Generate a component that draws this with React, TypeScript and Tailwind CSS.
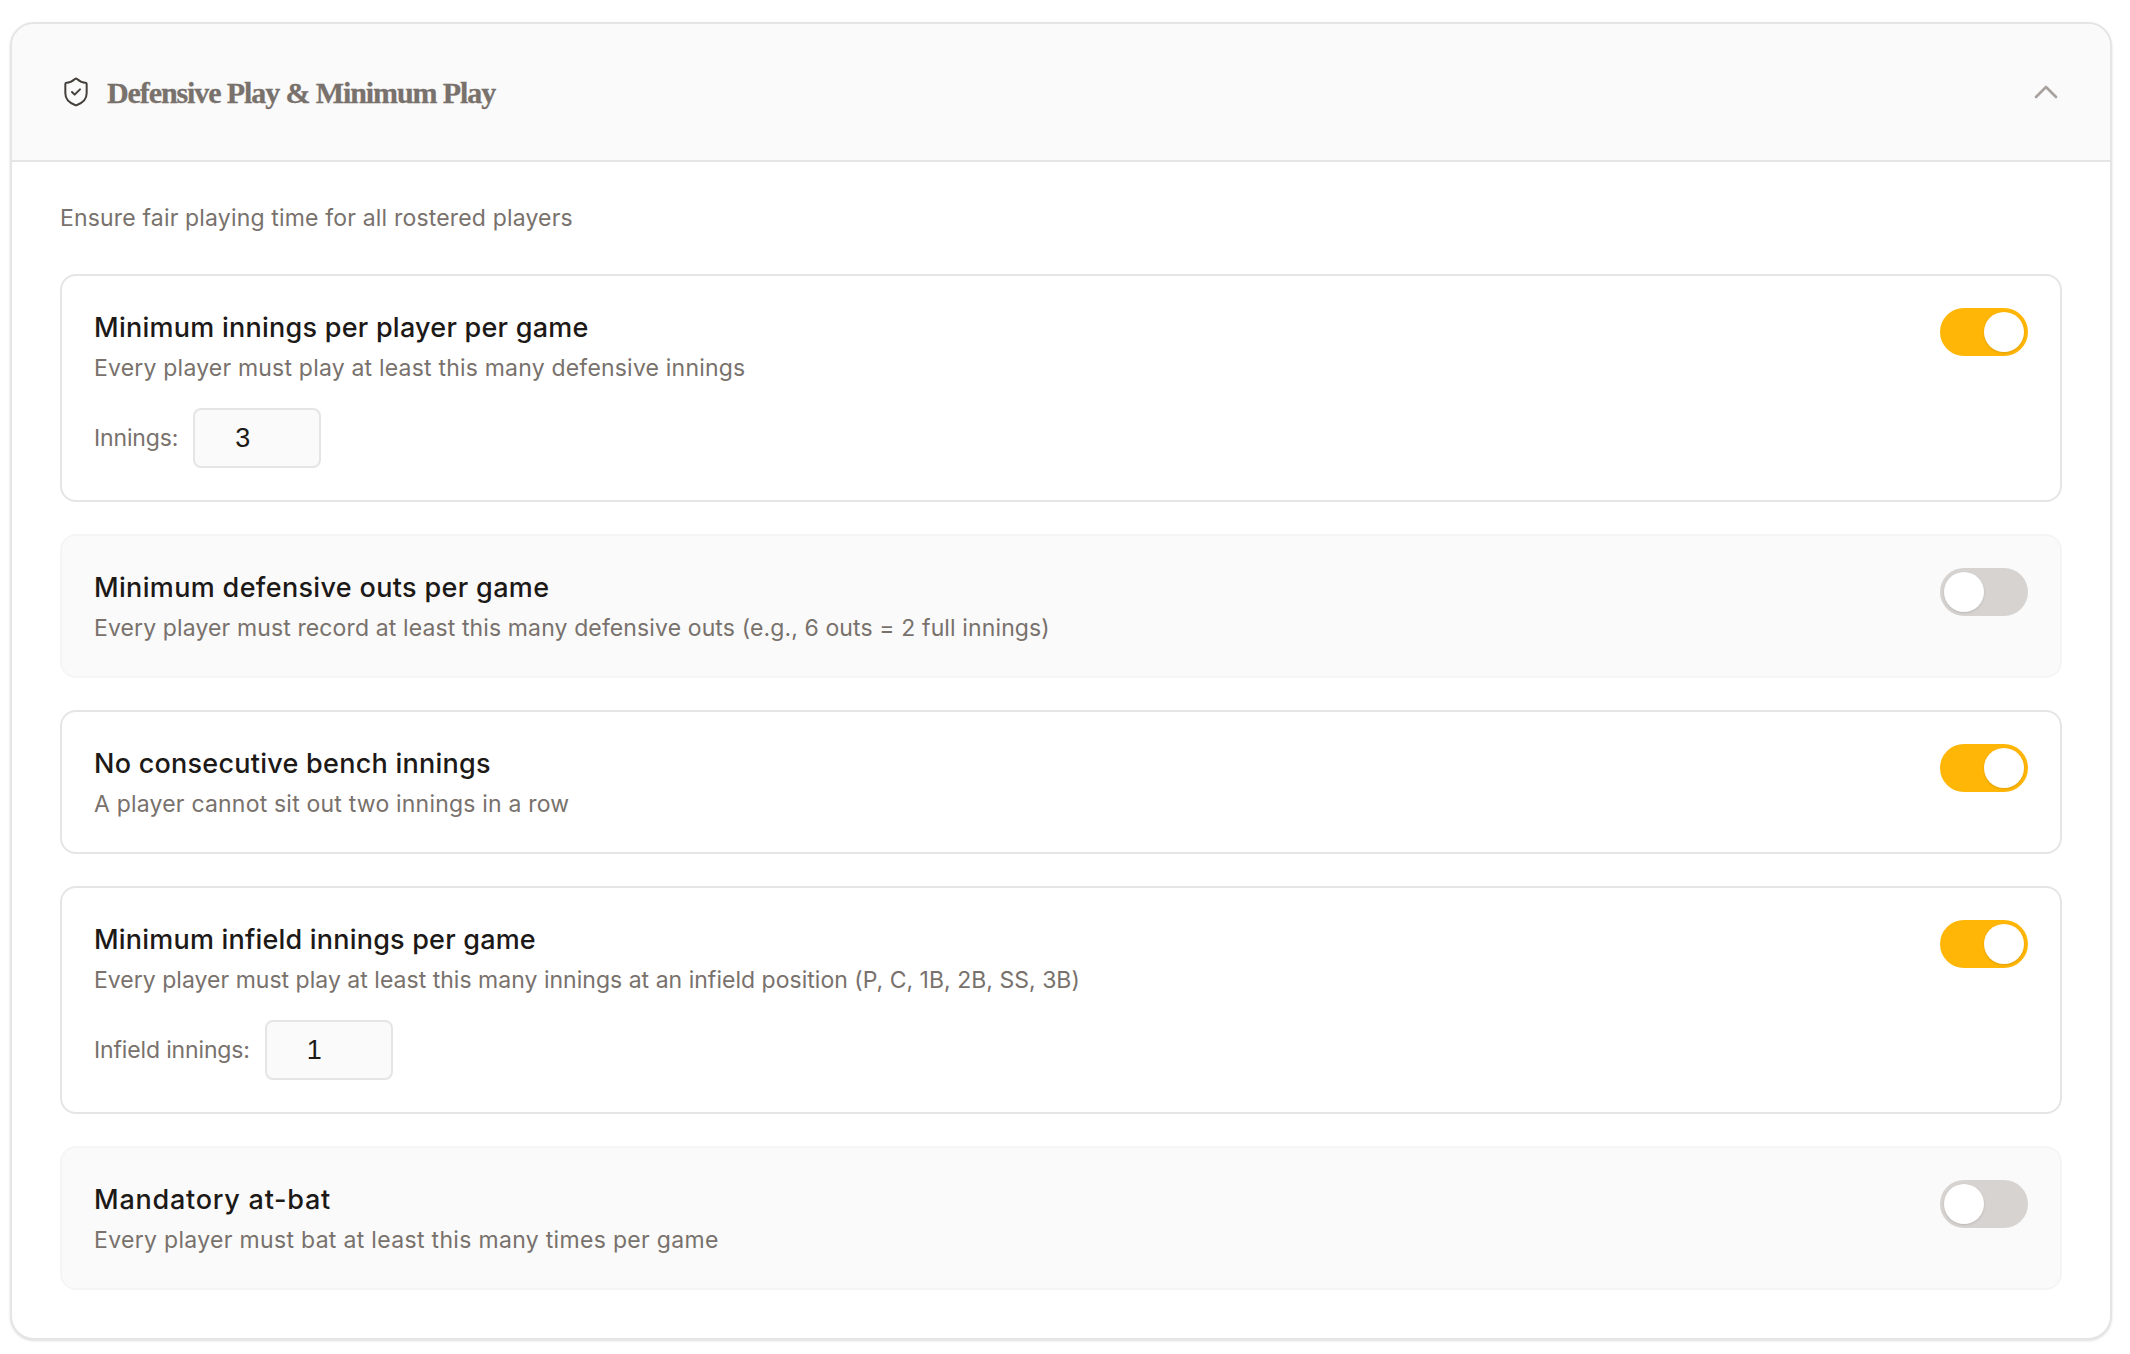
import { ChevronUp, ShieldCheck } from 'lucide-react';

const RULES = [
  {
    title: 'Minimum innings per player per game',
    titleClass: 'tracking-[0.25px]',
    desc: 'Every player must play at least this many defensive innings',
    descClass: 'tracking-[0.2px]',
    on: true,
    label: 'Innings:',
    value: '3',
  },
  {
    title: 'Minimum defensive outs per game',
    titleClass: 'tracking-[0.34px]',
    desc: 'Every player must record at least this many defensive outs (e.g., 6 outs = 2 full innings)',
    descClass: 'tracking-[0.12px]',
    on: false,
  },
  {
    title: 'No consecutive bench innings',
    titleClass: 'tracking-[0.25px]',
    desc: 'A player cannot sit out two innings in a row',
    descClass: 'tracking-[0.2px]',
    on: true,
  },
  {
    title: 'Minimum infield innings per game',
    titleClass: 'tracking-[0.2px]',
    desc: 'Every player must play at least this many innings at an infield position (P, C, 1B, 2B, SS, 3B)',
    descClass: 'tracking-[0.02px]',
    on: true,
    label: 'Infield innings:',
    value: '1',
  },
  {
    title: 'Mandatory at-bat',
    titleClass: 'tracking-[0.75px]',
    desc: 'Every player must bat at least this many times per game',
    descClass: 'tracking-[0.32px]',
    on: false,
  },
];

function Toggle({ on }: { on: boolean }) {
  return (
    <div
      className={
        on
          ? 'w-[88px] h-12 rounded-full bg-[#ffb607] p-1 flex justify-end shrink-0'
          : 'w-[88px] h-12 rounded-full bg-[#d6d3d1] p-1 flex justify-start shrink-0'
      }
    >
      <div className="w-10 h-10 rounded-full bg-white shadow-sm" />
    </div>
  );
}

export default function App() {
  return (
    <div className="bg-white min-h-[1354px] pt-[22px] pl-[10px] pr-[18px] font-['Inter','Liberation_Sans',sans-serif]">
      <div className="rounded-3xl border-2 border-[#e5e5e5] bg-white overflow-hidden shadow-sm">
        <div className="h-[138px] bg-[#fafafa] border-b-2 border-[#e5e5e5] flex items-center justify-between pl-12 pr-11">
          <div className="flex items-center gap-[15px]">
            <ShieldCheck className="w-8 h-8 text-[#44403c]" strokeWidth={1.5} />
            <h2 className="font-['Liberation_Serif',serif] font-bold text-[30px] tracking-[-1.1px] text-[#78716c] mt-px [-webkit-text-stroke:0.3px_#78716c]">
              Defensive Play &amp; Minimum Play
            </h2>
          </div>
          <ChevronUp className="w-10 h-10 text-[#a8a29e]" strokeWidth={1.6} />
        </div>

        <div className="pt-10 pb-12 px-12">
          <p className="text-[23px] leading-8 text-[#78716c] mb-10 tracking-[0.17px]">
            Ensure fair playing time for all rostered players
          </p>
          <div className="flex flex-col gap-8">
            {RULES.map((r) => (
              <div
                key={r.title}
                className={
                  r.on
                    ? 'rounded-2xl border-2 border-[#e5e5e5] bg-white pt-8 px-8 pb-[29px] flex justify-between'
                    : 'rounded-2xl border-2 border-[#f5f5f4] bg-[#fafafa] pt-8 px-8 pb-[29px] flex justify-between'
                }
              >
                <div>
                  <div className={`mt-px text-[27px] leading-[38px] font-medium text-[#1c1917] ${r.titleClass}`}>{r.title}</div>
                  <div className={`mt-[2px] text-[23px] leading-[38px] text-[#78716c] ${r.descClass}`}>{r.desc}</div>
                  {r.label && (
                    <div className="flex items-center gap-[15px] mt-[21px] mb-[3px]">
                      <span className="text-[23px] text-[#78716c] tracking-[-0.15px]">{r.label}</span>
                      <input
                        readOnly
                        value={r.value}
                        className="w-[128px] h-[60px] rounded-lg border-2 border-[#e5e5e5] bg-[#fafafa] pl-[40px] font-['Liberation_Sans',sans-serif] text-[27px] text-[#1c1917]"
                      />
                    </div>
                  )}
                </div>
                <Toggle on={r.on} />
              </div>
            ))}
          </div>
        </div>
      </div>
    </div>
  );
}
